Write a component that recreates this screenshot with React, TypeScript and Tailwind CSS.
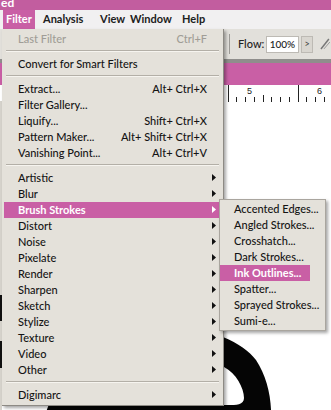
import { ReactNode } from "react"

type Item =
  | { sep: true }
  | {
      sep?: false
      label: string
      shortcut?: string
      arrow?: boolean
      disabled?: boolean
      active?: boolean
    }

const filterItems: Item[] = [
  { label: "Last Filter", shortcut: "Ctrl+F", disabled: true },
  { sep: true },
  { label: "Convert for Smart Filters" },
  { sep: true },
  { label: "Extract...", shortcut: "Alt+ Ctrl+X" },
  { label: "Filter Gallery..." },
  { label: "Liquify...", shortcut: "Shift+ Ctrl+X" },
  { label: "Pattern Maker...", shortcut: "Alt+ Shift+ Ctrl+X" },
  { label: "Vanishing Point...", shortcut: "Alt+ Ctrl+V" },
  { sep: true },
  { label: "Artistic", arrow: true },
  { label: "Blur", arrow: true },
  { label: "Brush Strokes", arrow: true, active: true },
  { label: "Distort", arrow: true },
  { label: "Noise", arrow: true },
  { label: "Pixelate", arrow: true },
  { label: "Render", arrow: true },
  { label: "Sharpen", arrow: true },
  { label: "Sketch", arrow: true },
  { label: "Stylize", arrow: true },
  { label: "Texture", arrow: true },
  { label: "Video", arrow: true },
  { label: "Other", arrow: true },
  { sep: true },
  { label: "Digimarc", arrow: true },
]

const brushItems = [
  "Accented Edges...",
  "Angled Strokes...",
  "Crosshatch...",
  "Dark Strokes...",
  "Ink Outlines...",
  "Spatter...",
  "Sprayed Strokes...",
  "Sumi-e...",
]

const Arrow = ({ white }: { white?: boolean }) => (
  <svg width="4" height="7" viewBox="0 0 4 7" className="absolute right-[5px] top-[4px]">
    <path d="M0 0L4 3.5L0 7Z" fill={white ? "#ffffff" : "#111111"} />
  </svg>
)

const Row = ({ item }: { item: Item }) => {
  if (item.sep) {
    return (
      <div className="h-[9px] px-[4px] pt-[3px]">
        <div className="h-px bg-[#b3afa7]" />
        <div className="h-px bg-[#f6f4ef]" />
      </div>
    )
  }
  return (
    <div
      className={
        "relative mx-[2px] flex h-[16px] items-center pl-[14px] pr-[14px] " +
        (item.active
          ? "bg-[#c95fa5] font-bold text-white"
          : item.disabled
          ? "text-[#a09d96]"
          : "text-[#141414]")
      }
    >
      <span className="flex-1 whitespace-nowrap">{item.label}</span>
      {item.shortcut && <span className="whitespace-nowrap">{item.shortcut}</span>}
      {item.arrow && <Arrow white={item.active} />}
    </div>
  )
}

const MenuBarItem = ({ children, w }: { children: ReactNode; w: string }) => (
  <span className={"text-[#202020] " + w}>{children}</span>
)

const Ruler = () => {
  const ticks = []
  for (let i = 0; i < 24; i++) {
    const x = 157.5 + i * 8.75
    const major = i % 8 === 0
    const mid = i % 4 === 0 && !major
    ticks.push(
      <rect
        key={i}
        x={Math.round(x)}
        y={major ? 0 : mid ? 10 : 12}
        width="1"
        height={major ? 17 : mid ? 7 : 5}
        fill="#222"
      />
    )
  }
  return (
    <svg width="331" height="17" className="block">
      {ticks}
      <text x="247" y="9" fontSize="9" fontFamily="Liberation Sans, sans-serif" fill="#222">
        5
      </text>
      <text x="317" y="9" fontSize="9" fontFamily="Liberation Sans, sans-serif" fill="#222">
        6
      </text>
    </svg>
  )
}

export default function App() {
  return (
    <div className="relative h-[410px] w-[331px] overflow-hidden bg-white font-['Lato','Liberation_Sans',sans-serif] text-[11px] font-medium">
      {/* title bar */}
      <div className="h-[10px] overflow-hidden bg-[#c25d9f] pl-[1px]">
        <span className="-mt-[3px] block text-[12px] font-bold leading-none text-white">ed</span>
      </div>

      {/* menu bar */}
      <div className="flex h-[19px] items-center bg-[#f1f0f1] font-bold">
        <span className="ml-[3px] flex h-full w-[32px] items-center bg-[#c95fa5] pl-[3px] text-white">
          Filter
        </span>
        <span className="ml-[8px]" />
        <MenuBarItem w="w-[57px]">Analysis</MenuBarItem>
        <MenuBarItem w="w-[30px]">View</MenuBarItem>
        <MenuBarItem w="w-[52px]">Window</MenuBarItem>
        <MenuBarItem w="w-[30px]">Help</MenuBarItem>
      </div>

      {/* options toolbar */}
      <div className="flex h-[30px] items-center bg-[#e2e0db] pl-[229px]">
        <div className="h-[20px] w-px bg-[#9c9a96]" />
        <span className="ml-[8px] w-[28px] text-[#222]">Flow:</span>
        <div className="flex h-[17px] w-[34px] items-center border border-[#bdbab4] bg-white pl-[3px] text-[10px] text-[#222]">
          100%
        </div>
        <div className="ml-[2px] flex h-[17px] w-[12px] items-center justify-center border border-[#bdbab4] bg-[#d9d6d0] text-[9px] text-[#444]">
          &gt;
        </div>
        <svg width="12" height="14" viewBox="0 0 12 14" className="ml-[6px]">
          <path d="M2 12L10 2" stroke="#777" strokeWidth="1.5" />
          <path d="M5 12L11 5" stroke="#999" strokeWidth="1" />
        </svg>
      </div>
      <div className="h-[4px] bg-[#8f8e8c]" />

      {/* document tab strip */}
      <div className="h-[22px] bg-[#c95fa5]" />
      <Ruler />

      {/* canvas artwork */}
      <svg width="331" height="410" className="absolute left-0 top-0">
        <rect x="0" y="101" width="2" height="309" fill="#d6d3cc" />
        <path
          fillRule="evenodd"
          fill="#050505"
          d="M150 330 C195 322 240 338 256 360 C267 377 272 398 271 420 L45 420 C45 405 60 380 90 360 C110 345 130 334 150 330 Z M224 367 C236 373 244 388 244 398 C244 405 236 405 228 405 L70 405 C40 405 60 370 120 362 C170 356 205 358 224 367 Z"
        />
        <rect x="0" y="295" width="3" height="26" fill="#111" />
        <rect x="0" y="341" width="3" height="27" fill="#111" />
      </svg>

      {/* Filter dropdown */}
      <div className="absolute left-[2px] top-[29px] z-10 w-[222px] border-r border-b border-[#8d8a84] bg-[#e4e1da] py-[2px] shadow-[2px_2px_3px_rgba(0,0,0,0.35)]">
        {filterItems.map((item, i) => (
          <Row key={i} item={item} />
        ))}

        {/* Brush Strokes submenu */}
        <div className="absolute left-[217px] top-[170px] w-[107px] border border-[#a9a59e] bg-[#e4e1da] py-[1px] shadow-[2px_2px_3px_rgba(0,0,0,0.35)]">
          {brushItems.map((label) => (
            <div
              key={label}
              className={
                "flex h-[16px] items-center whitespace-nowrap pl-[14px] " +
                (label === "Ink Outlines..."
                  ? "mr-[15px] bg-[#c95fa5] font-bold text-white"
                  : "text-[#141414]")
              }
            >
              {label}
            </div>
          ))}
        </div>
      </div>
    </div>
  )
}
